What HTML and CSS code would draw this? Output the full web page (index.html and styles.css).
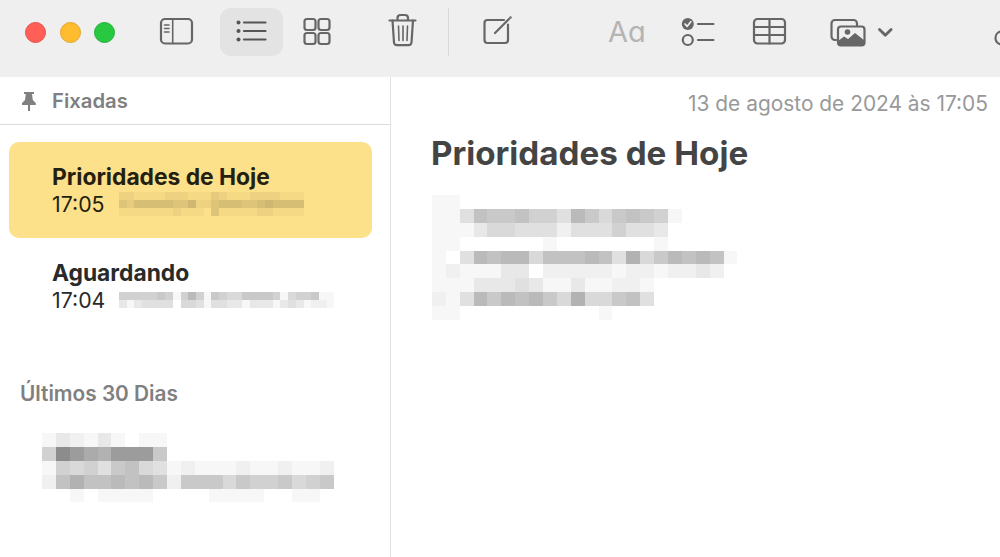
FILE: index.html
```html
<!DOCTYPE html>
<html lang="pt">
<head>
    <meta charset="UTF-8">
    <meta name="viewport" content="width=device-width, initial-scale=1.0">
    <title>Notas</title>
    <link rel="stylesheet" href="styles.css">
</head>
<body>

<div class="toolbar">
    <div class="lights">
        <span class="light light-red"></span>
        <span class="light light-yellow"></span>
        <span class="light light-green"></span>
    </div>

    <svg class="tool tool-side" width="36" height="48" viewBox="159 8 36 48">
        <rect x="161" y="19" width="31" height="24.5" rx="4"/>
        <path d="M172.7 19v24.5M164.5 25h4.5M164.5 28.500h4.500M164.500 32h4.500" class="thin"/>
    </svg>
    <svg class="tool tool-list" width="63" height="48" viewBox="220 8 63 48">
        <circle cx="238.500" cy="22.500" r="2" class="fill"/>
        <circle cx="238.500" cy="31" r="2" class="fill"/>
        <circle cx="238.500" cy="39.500" r="2" class="fill"/>
        <path d="M244 22.500h21.500M244 31h21.500M244 39.500h21.500"/>
    </svg>
    <svg class="tool tool-grid" width="28" height="48" viewBox="303 8 28 48">
        <rect x="304.500" y="19" width="11" height="11" rx="2.500"/>
        <rect x="318.500" y="19" width="11" height="11" rx="2.500"/>
        <rect x="304.500" y="33" width="11" height="11" rx="2.500"/>
        <rect x="318.500" y="33" width="11" height="11" rx="2.500"/>
    </svg>
    <svg class="tool tool-trash" width="30" height="48" viewBox="388 8 30 48">
        <path d="M389.500 20.500h26M397.500 20.500v-2.500a3 3 0 0 1 3-3h4.500a3 3 0 0 1 3 3v2.500"/>
        <path d="M392.500 20.500l1.500 22a3 3 0 0 0 3 2.700h11.500a3 3 0 0 0 3-2.700l1.500-22"/>
        <path d="M398.500 26l.5 14.500M403 26v14.500M407.500 26l-.5 14.500" class="thin"/>
    </svg>
    <div class="tool-divider"></div>
    <svg class="tool tool-compose" width="30" height="48" viewBox="483 8 30 48">
        <path d="M504 20h-16.500a3 3 0 0 0-3 3v17a3 3 0 0 0 3 3h17.500a3 3 0 0 0 3-3v-15.500"/>
        <path d="M495 33l14-14"/>
        <circle cx="510.500" cy="17.500" r="1.200" class="fill"/>
    </svg>
    <span class="tool-format">Aa</span>
    <svg class="tool tool-check" width="34" height="48" viewBox="681 8 34 48">
        <circle cx="687.800" cy="24" r="6" class="fill"/>
        <path d="M685 24l2.200 2.300 3.600-4.600" class="tick"/>
        <circle cx="687.800" cy="40" r="5"/>
        <path d="M698 24h15.500M698 40h15.500"/>
    </svg>
    <svg class="tool tool-table" width="35" height="48" viewBox="752 8 35 48">
        <rect x="754" y="19" width="31" height="24.500" rx="3.500"/>
        <path d="M754 27h31M754 35h31M769.500 19v24.500"/>
    </svg>
    <svg class="tool tool-media" width="64" height="48" viewBox="830 8 64 48">
        <path d="M836 40h-1a3.500 3.500 0 0 1-3.500-3.500v-13a3.500 3.500 0 0 1 3.500-3.500h18.500a3.500 3.500 0 0 1 3.500 3.500v2"/>
        <rect x="838" y="26.500" width="26.500" height="19" rx="3"/>
        <circle cx="847.500" cy="32" r="2.800" class="fill"/>
        <path d="M838 41l6-4.500 4 2.500 7-6 9.500 7.500v2a3 3 0 0 1-3 3h-20.500a3 3 0 0 1-3-3z" class="fill"/>
        <path d="M879.500 29.500l5.800 5.800 5.800-5.800" class="bold"/>
    </svg>
    <svg class="tool tool-share" width="6" height="48" viewBox="994 8 6 48">
        <path d="M1001 31.500a6.500 6.500 0 0 0-5.500 6.500 6.500 6.500 0 0 0 4 6"/>
    </svg>
</div>

<div class="layout">
    <div class="sidebar">
        <div class="pinned-head">
            <svg class="pin" width="16" height="20" viewBox="0 0 16 20">
                <path d="M3 1h10v2h-2l.8 6 3 3v2H1v-2l3-3 .8-6H3zM7 14h2v6H7z"/>
            </svg>
            <span>Fixadas</span>
        </div>

        <div class="note-row selected">
            <div class="note-title">Prioridades de Hoje</div>
            <div class="note-line">
                <span class="note-time">17:05</span>
                <div class="mosaic mosaic-small" data-rows="221111222111321112222111 435555544622455544565555 111111121110411111221111"></div>
            </div>
        </div>

        <div class="note-row">
            <div class="note-title">Aguardando</div>
            <div class="note-line">
                <span class="note-time">17:04</span>
                <div class="mosaic mosaic-small" data-rows="6666676169617655777761566711 3134444055414433133313431221"></div>
            </div>
        </div>

        <div class="section-title">Últimos 30 Dias</div>
        <div class="mosaic mosaic-large mosaic-recent" data-rows="132131011 6fdbaddd7 1656478541211121121120 28a8898972777576675670 00101111000011110011"></div>
    </div>

    <div class="editor">
        <div class="note-date">13 de agosto de 2024 às 17:05</div>
        <h1 class="editor-title">Prioridades de Hoje</h1>
        <div class="mosaic mosaic-large mosaic-body" data-rows="01100000000000 0114877866497578761 011135544424446443 01100000010000000100 010498995888984a5798981 01211133022222122122320 01113334311311221 02149798975a55784 01100000000001"></div>
    </div>
</div>

<script src="mosaic.js"></script>
</body>
</html>
```

FILE: styles.css
```css
* {
    box-sizing: border-box;
}
body {
    font-family: Inter, "Noto Sans", sans-serif;
    background-color: #fff;
    margin: 0;
    width: 1000px;
    height: 557px;
    overflow: hidden;
}

/* toolbar */
.toolbar {
    display: flex;
    height: 77px;
    padding: 8px 0 0 25px;
    background-color: #efefef;
    overflow: hidden;
}
.lights {
    display: flex;
    gap: 13.500px;
    align-items: center;
    height: 48px;
}
.light {
    width: 21px;
    height: 21px;
    border-radius: 50%;
}
.light-red {
    background-color: #ff5f57;
    border: 1px solid #e5504a;
}
.light-yellow {
    background-color: #febc2e;
    border: 1px solid #e2a52a;
}
.light-green {
    background-color: #28c840;
    border: 1px solid #25b13a;
}
.tool {
    flex: none;
    fill: none;
    stroke: #666;
    stroke-width: 2.2;
    stroke-linecap: round;
    stroke-linejoin: round;
}
.tool .fill {
    fill: #666;
    stroke: none;
}
.tool .thin {
    stroke-width: 1.6;
}
.tool .bold {
    stroke-width: 2.8;
}
.tool .tick {
    stroke: #efefef;
    stroke-width: 1.7;
}
.tool-side {
    margin-left: 44px;
}
.tool-list {
    margin-left: 25px;
    background-color: #e3e3e3;
    border-radius: 11px;
    stroke: #555;
}
.tool-list .fill {
    fill: #555;
}
.tool-grid {
    margin-left: 20px;
}
.tool-trash {
    margin-left: 57px;
}
.tool-divider {
    flex: none;
    width: 1px;
    height: 48px;
    margin-left: 30px;
    background-color: #d8d8d8;
}
.tool-compose {
    margin-left: 34px;
}
.tool-format {
    flex: none;
    width: 37px;
    height: 48px;
    margin-left: 95px;
    font-size: 29px;
    line-height: 48px;
    color: #b4b4b4;
    font-feature-settings: "cv11";
}
.tool-check {
    margin-left: 36px;
}
.tool-table {
    margin-left: 37px;
}
.tool-media {
    margin-left: 43px;
}
.tool-share {
    margin-left: 100px;
}

/* panes */
.layout {
    display: flex;
    height: 480px;
}
.sidebar {
    flex: none;
    width: 391px;
    border-right: 1px solid #e2e2e2;
}
.pinned-head {
    display: flex;
    align-items: center;
    height: 48px;
    padding: 0 0 0 21px;
    border-bottom: 1px solid #dcdcdc;
    font-size: 20.300px;
    font-weight: 600;
    color: #808080;
}
.pin {
    margin-right: 15px;
    fill: #808080;
}
.note-row {
    height: 96px;
    margin: 17px 18px 0 9px;
    padding: 21px 0 0 43px;
    border-radius: 10px;
    color: #2a2a2a;
}
.note-row.selected {
    background-color: #fde08a;
    color: #241f10;
}
.note-row + .note-row {
    margin-top: 0;
}
.note-title {
    font-size: 22.800px;
    font-weight: 700;
    line-height: 28px;
}
.note-line {
    display: flex;
    align-items: center;
    height: 25px;
}
.note-time {
    width: 67px;
    font-size: 21.300px;
}
.section-title {
    margin: 48px 0 0 20px;
    font-size: 20.800px;
    font-weight: 600;
    line-height: 24px;
    color: #808080;
}

/* blurred out text */
.mosaic {
    filter: blur(0.5px);
}
.mosaic-row {
    display: flex;
}
.mosaic-large .mosaic-cell {
    width: 13.900px;
    height: 13.900px;
}
.mosaic-small .mosaic-cell {
    width: 7.700px;
    height: 8px;
}
.mosaic-recent {
    margin: 27px 0 0 42px;
}

/* note pane */
.editor {
    flex: 1;
    padding: 15px 12px 0 27px;
}
.note-date {
    font-size: 20.900px;
    line-height: 24px;
    text-align: right;
    color: #999;
}
.editor-title {
    margin: 17px 0 0 13px;
    font-size: 33.200px;
    font-weight: 700;
    line-height: 40px;
    color: #444;
}
.mosaic-body {
    margin-top: 22px;
}
```

FILE: mosaic.js
```js
// Build the pixelated text blocks from their darkness values (one hex digit per cell)
document.querySelectorAll(".mosaic").forEach(block => {
    block.dataset.rows.split(" ").forEach(values => {
        const row = document.createElement("div");
        row.className = "mosaic-row";
        values.split("").forEach(value => {
            const cell = document.createElement("div");
            cell.className = "mosaic-cell";
            cell.style.backgroundColor = `rgba(0, 0, 0, ${parseInt(value, 16) * 0.03})`;
            row.appendChild(cell);
        });
        block.appendChild(row);
    });
});
```
